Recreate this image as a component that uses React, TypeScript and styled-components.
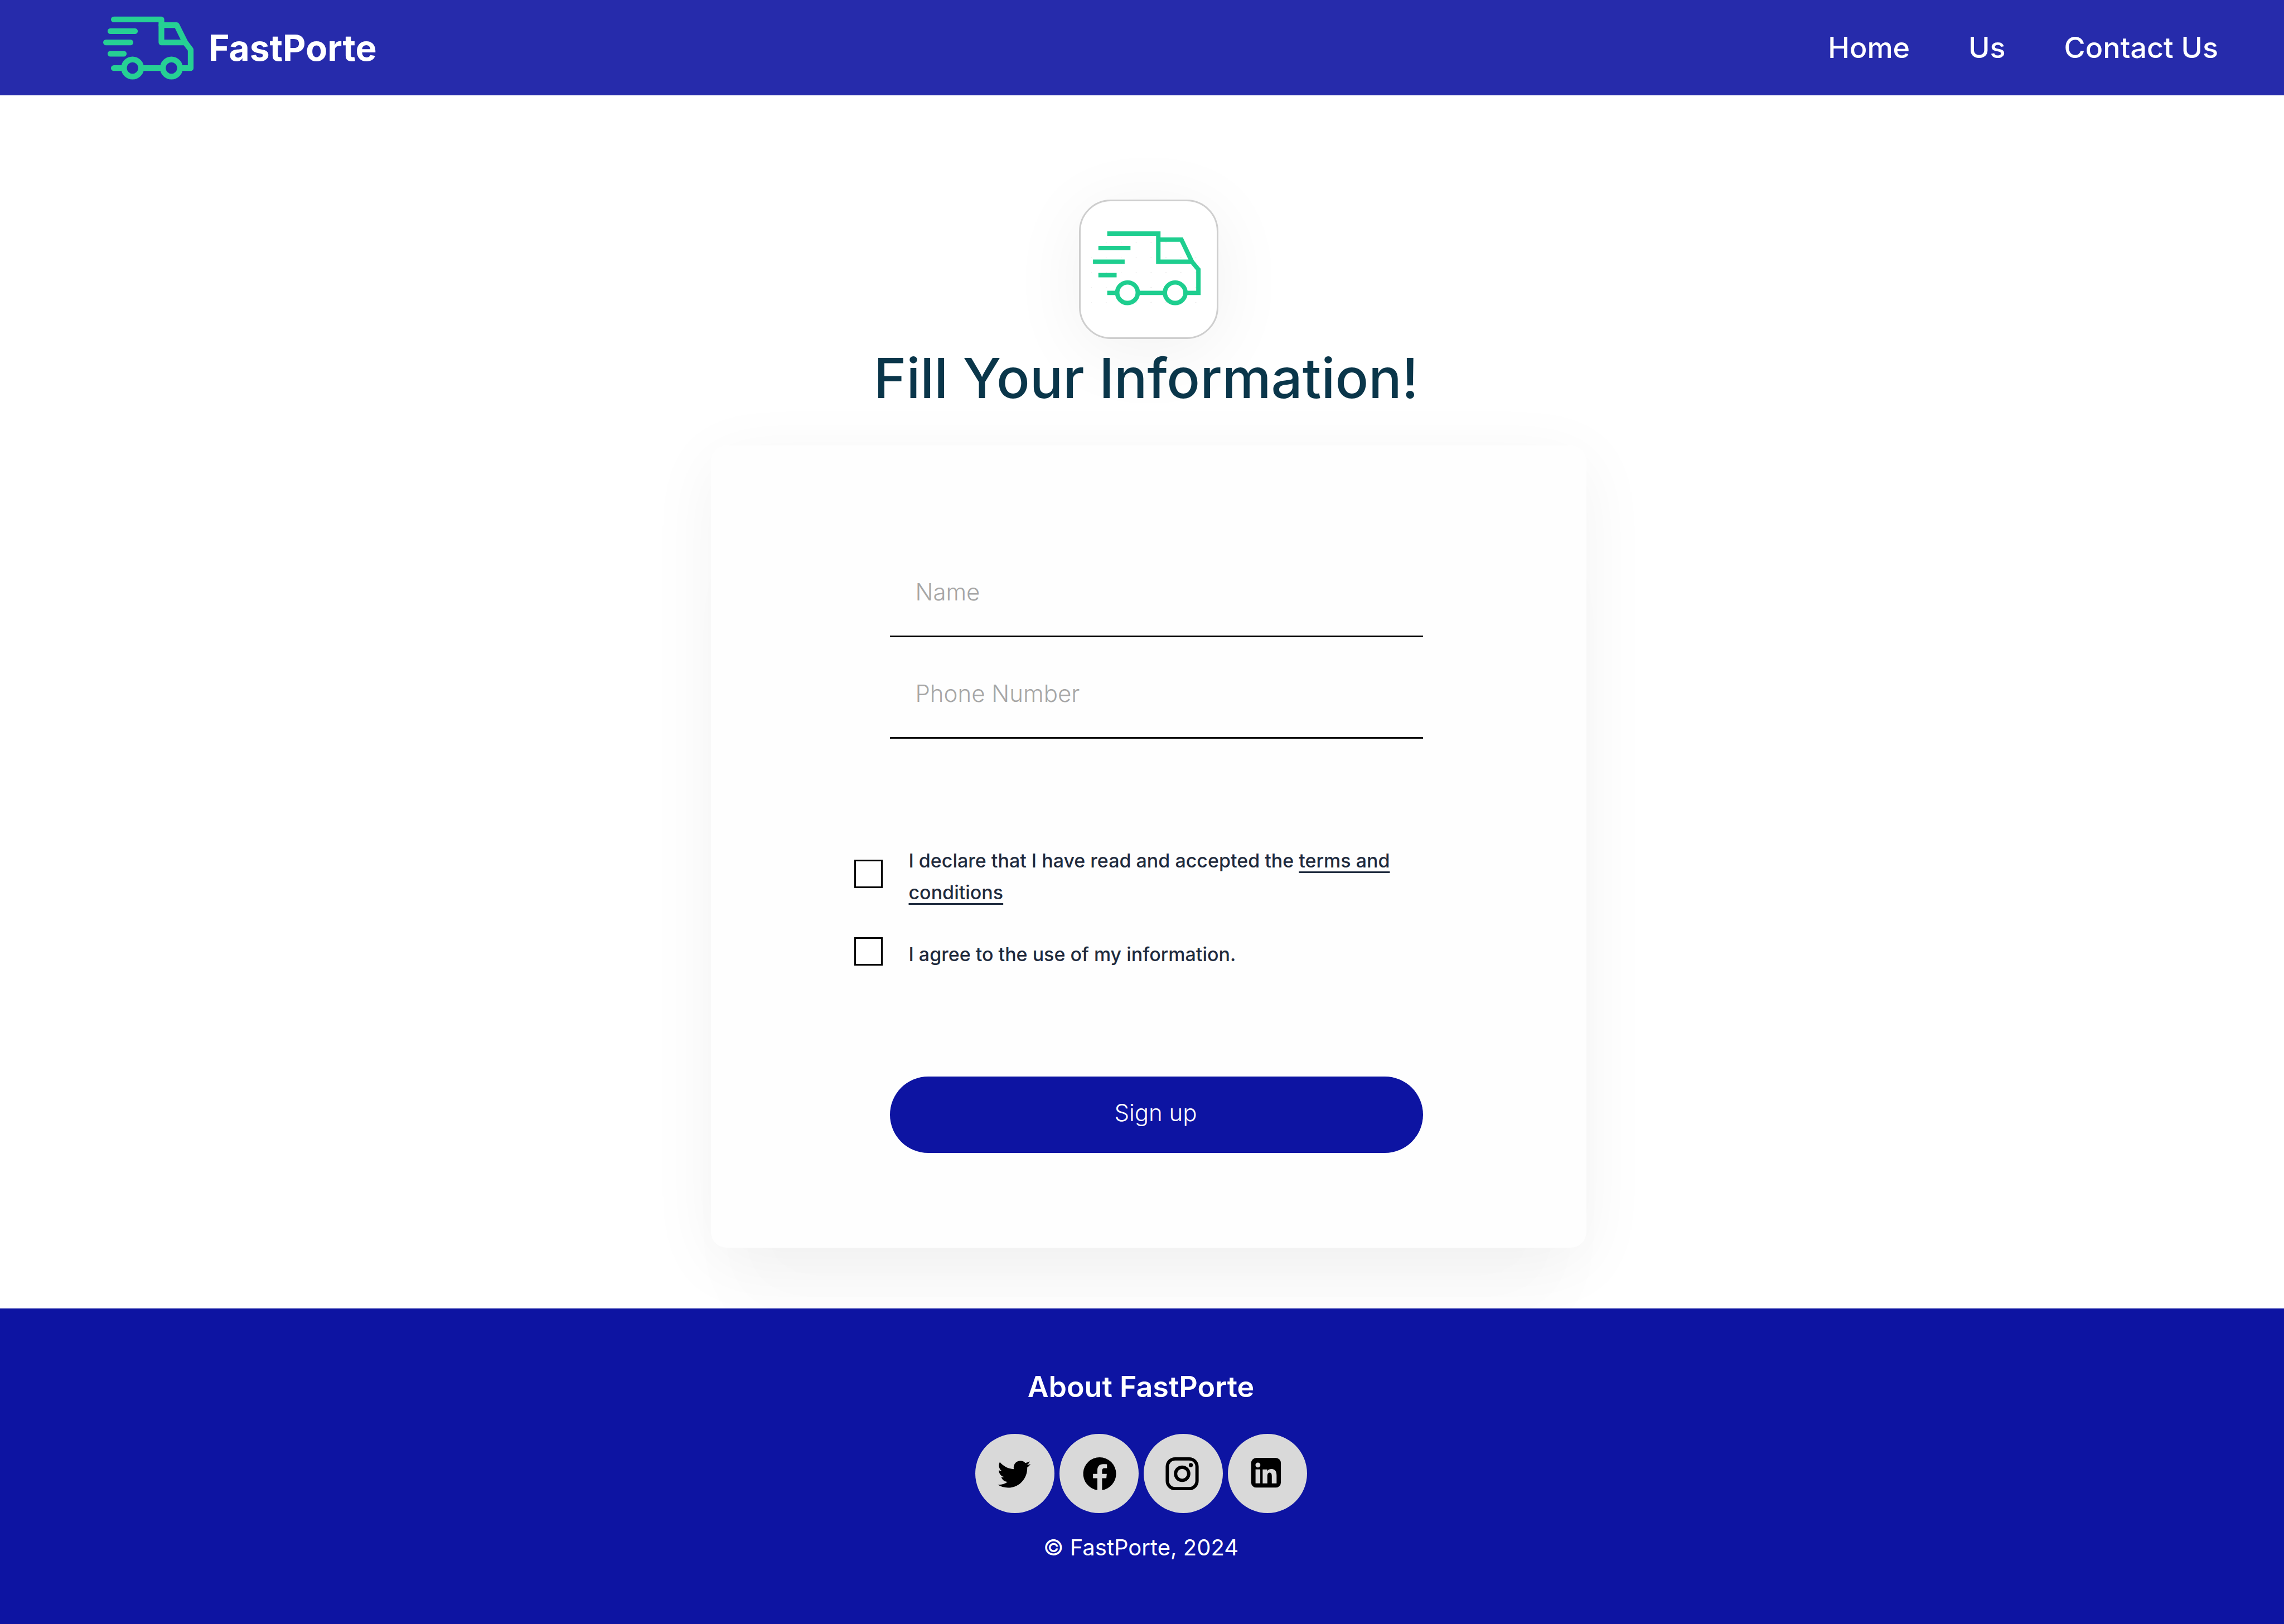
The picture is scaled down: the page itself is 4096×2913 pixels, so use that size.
import React from "react";
import styled, { createGlobalStyle } from "styled-components";

const color = {
  header: "#262bab",
  brand: "#0d14a2",
  mint: "#26d094",
  mintDeep: "#1ece8f",
  heading: "#0a364a",
  body: "#1e2a3d",
  muted: "#a6a6a6",
  disc: "#d9d9d9",
};

const GlobalStyle = createGlobalStyle`
  *, *::before, *::after { box-sizing: border-box; }
  body {
    margin: 0;
    background: #fff;
    color: ${color.body};
    font-family: Inter, "Liberation Sans", sans-serif;
  }
`;

const Page = styled.div`
  display: flex;
  flex-direction: column;
  min-height: 100vh;
`;

const Header = styled.header`
  display: flex;
  align-items: center;
  justify-content: space-between;
  height: 171px;
  padding: 0 118px 0 182px;
  background: ${color.header};
  color: #fff;
`;

const Brand = styled.a`
  display: flex;
  align-items: center;
  gap: 24px;
  color: inherit;
  font-size: 64px;
  line-height: 76px;
  font-weight: 700;
  text-decoration: none;
`;

const BrandMark = styled.svg`
  display: block;
  width: 168px;
  height: 117px;
`;

const Nav = styled.nav`
  display: flex;
  gap: 105px;
`;

const NavLink = styled.a`
  color: inherit;
  font-size: 52px;
  line-height: 62px;
  font-weight: 500;
  text-decoration: none;
`;

const Main = styled.main`
  display: flex;
  flex: 1;
  flex-direction: column;
  align-items: center;
  padding: 187px 0 109px 23px;
`;

const Tile = styled.div`
  display: flex;
  align-items: center;
  justify-content: center;
  width: 250px;
  height: 250px;
  border: 3px solid #cecece;
  border-radius: 57px;
  background: #fff;
  box-shadow: 0 20px 136px rgba(0, 0, 0, 0.06);
`;

const TileMark = styled.svg`
  display: block;
  width: 205px;
  height: 142px;
`;

const Title = styled.h1`
  margin: 10px 0 60px;
  padding-right: 8px;
  color: ${color.heading};
  font-size: 99px;
  line-height: 121px;
  font-weight: 500;
`;

const Card = styled.form`
  display: flex;
  flex-direction: column;
  gap: 190px;
  width: 1570px;
  max-width: 100%;
  padding: 237px 293px 170px 257px;
  border-radius: 28px;
  background: #fefefe;
  box-shadow:
    0 26px 124px rgba(0, 0, 0, 0.05),
    0 149px 128px -43px rgba(0, 0, 0, 0.018);
`;

const Fields = styled.div`
  display: flex;
  flex-direction: column;
  gap: 75px;
  padding-left: 64px;
`;

const Field = styled.div`
  display: grid;
  grid-template-areas: "field";
`;

const TextInput = styled.input`
  grid-area: field;
  width: 100%;
  height: 107px;
  padding: 0 46px 52px;
  border: 0;
  border-bottom: 3px solid #000;
  border-radius: 0;
  outline: none;
  background: transparent;
  color: ${color.body};
  font-family: inherit;
  font-size: 42px;
  line-height: 52px;
  font-weight: 300;
`;

const FieldLabel = styled.label`
  grid-area: field;
  padding: 0 46px;
  color: ${color.muted};
  font-size: 42px;
  line-height: 52px;
  font-weight: 300;
  pointer-events: none;

  ${TextInput}:not(:placeholder-shown) + & {
    visibility: hidden;
  }
`;

const Consents = styled.div`
  display: flex;
  flex-direction: column;
  gap: 52px;
`;

const Consent = styled.div`
  display: flex;
  align-items: center;
  gap: 47px;
`;

const Checkbox = styled.input`
  flex: none;
  appearance: none;
  width: 51px;
  height: 51px;
  margin: 0 0 9px;
  border: 3px solid #000;
  background: #fff;

  &:checked {
    background: ${color.brand};
    box-shadow: inset 0 0 0 6px #fff;
  }
`;

const ConsentLabel = styled.label`
  font-size: 34px;
  line-height: 57px;
  font-weight: 500;
`;

const TextLink = styled.a`
  color: inherit;
  text-decoration: underline;
  text-decoration-thickness: 3px;
  text-underline-offset: 7px;
`;

const Actions = styled.div`
  display: flex;
  padding-left: 64px;
`;

const SubmitButton = styled.button`
  flex: 1;
  height: 137px;
  padding: 0 2px 8px 0;
  border: 0;
  border-radius: 69px;
  background: ${color.brand};
  color: #fff;
  font-family: inherit;
  font-size: 42px;
  line-height: 52px;
  font-weight: 300;
`;

const Footer = styled.footer`
  display: flex;
  flex-direction: column;
  align-items: center;
  padding: 110px 4px 113px 0;
  background: ${color.brand};
  color: #fff;
`;

const FooterTitle = styled.h2`
  margin: 0;
  font-size: 52px;
  line-height: 62px;
  font-weight: 600;
`;

const Socials = styled.div`
  display: flex;
  gap: 9px;
  margin: 53px 0 38px;
`;

const SocialLink = styled.a`
  display: flex;
  align-items: center;
  justify-content: center;
  width: 142px;
  height: 142px;
  border-radius: 50%;
  background: ${color.disc};
  color: #000;
`;

const SocialIcon = styled.svg<{ $size: number }>`
  display: block;
  width: ${(p) => p.$size}px;
  height: ${(p) => p.$size}px;
  fill: currentColor;
`;

const Copyright = styled.p`
  margin: 0;
  font-size: 40px;
  line-height: 48px;
`;

function RoundedTruck() {
  return (
    <BrandMark
      viewBox="0 -1 236 164"
      fill="none"
      stroke={color.mint}
      strokeWidth="14.4"
      strokeLinecap="round"
      strokeLinejoin="round"
      aria-hidden="true"
    >
      <path d="M31 10H151V67.8H211" />
      <path d="M151 24.4H189.5L211 67.8 224.7 86V132.6H198" />
      <path d="M31 132.6H56M100 132.6H154" />
      <path d="M22.5 39.5H84.3M11.4 67.8H73M22.5 96.2H56.2" />
      <circle cx="78.2" cy="132.3" r="21.6" />
      <circle cx="176.2" cy="132.3" r="21.6" />
    </BrandMark>
  );
}

const gridRows = [
  { y: 0, from: 1, to: 4 },
  { y: 1, from: 1, to: 6 },
  { y: 2, from: 0, to: 7 },
  { y: 3, from: 0, to: 7 },
  { y: 4, from: 0, to: 7 },
  { y: 5, from: 0, to: 8 },
];

function SquareTruck() {
  return (
    <TileMark viewBox="2 4 288 200" fill="none" aria-hidden="true">
      <g stroke={color.mintDeep} strokeWidth="11.2">
        <path d="M42 14H171V85H256" />
        <path d="M171 29H229.3L256 85 272.3 104.5V163.7H240" />
        <path d="M42 163.7H66M120 163.7H187" />
        <path d="M19.6 50.3H100.7M6 85H86M19.6 118.7H65.7" />
        <circle cx="93.2" cy="163.3" r="26" />
        <circle cx="213.6" cy="163.3" r="26" />
      </g>
      <g fill="#000" opacity="0.22">
        {gridRows.flatMap((row) =>
          Array.from({ length: row.to - row.from + 1 }, (_, i) => (
            <circle
              key={`${row.y}-${i}`}
              cx={1.4 + (row.from + i) * 37.8}
              cy={-0.6 + row.y * 37.6}
              r="0.8"
            />
          ))
        )}
      </g>
    </TileMark>
  );
}

function Twitter() {
  return (
    <SocialIcon $size={68} viewBox="0.5 0 24 24" aria-hidden="true">
      <path d="M22.46,6C21.69,6.35 20.86,6.58 20,6.69C20.88,6.16 21.56,5.32 21.88,4.31C21.05,4.81 20.13,5.16 19.16,5.36C18.37,4.5 17.26,4 16,4C13.65,4 11.73,5.92 11.73,8.29C11.73,8.63 11.77,8.96 11.84,9.27C8.28,9.09 5.11,7.38 3,4.79C2.63,5.42 2.42,6.16 2.42,6.94C2.42,8.43 3.17,9.75 4.33,10.5C3.62,10.5 2.96,10.3 2.38,10C2.38,10 2.38,10 2.38,10.03C2.38,12.11 3.86,13.85 5.82,14.24C5.46,14.34 5.08,14.39 4.69,14.39C4.42,14.39 4.15,14.36 3.89,14.31C4.43,16 6,17.26 7.89,17.29C6.43,18.45 4.58,19.13 2.56,19.13C2.22,19.13 1.88,19.11 1.54,19.07C3.44,20.29 5.7,21 8.12,21C16,21 20.33,14.46 20.33,8.79C20.33,8.6 20.33,8.42 20.32,8.23C21.16,7.63 21.88,6.87 22.46,6Z" />
    </SocialIcon>
  );
}

function Facebook() {
  return (
    <SocialIcon $size={71} viewBox="-0.5 0 24 24" aria-hidden="true">
      <path d="M12 2A10 10 0 0 0 10.64 21.9V14.7H8V12.1H10.64V9.8C10.64 7.5 12 6.15 14.1 6.15C15 6.15 15.8 6.2 16.48 6.25V8.65H15C13.9 8.65 13.5 9.3 13.5 10.2V12.1H16.35L16.1 14.7H13.5V21.9A10 10 0 0 0 22 12A10 10 0 0 0 12 2Z" />
    </SocialIcon>
  );
}

function Instagram() {
  return (
    <SocialIcon $size={71} viewBox="0.5 0 24 24" aria-hidden="true">
      <rect x="3" y="3" width="18" height="18" rx="4.7" fill="none" stroke="currentColor" strokeWidth="2" />
      <circle cx="12" cy="12" r="4" fill="none" stroke="currentColor" strokeWidth="2" />
      <circle cx="17.25" cy="6.75" r="1.25" />
    </SocialIcon>
  );
}

function LinkedIn() {
  return (
    <SocialIcon $size={71} viewBox="0.7 0.6 24 24" aria-hidden="true">
      <rect x="3" y="3" width="18" height="18" rx="3.1" />
      <g fill={color.disc}>
        <circle cx="7.08" cy="7.3" r="1.5" />
        <path d="M5.64 9.95H8.5V18.4H5.64Z" />
        <path d="M9.96 9.95H12.7V11.05C13.1 10.3 14.1 9.75 15.25 9.75C17.6 9.75 18.4 11.3 18.4 13.7V18.4H15.5V14.1C15.5 12.8 15.2 11.9 14.2 11.9C13.2 11.9 12.8 12.8 12.8 14.1V18.4H9.96Z" />
      </g>
    </SocialIcon>
  );
}

const socials = [
  { name: "Twitter", Icon: Twitter },
  { name: "Facebook", Icon: Facebook },
  { name: "Instagram", Icon: Instagram },
  { name: "LinkedIn", Icon: LinkedIn },
];

export default function App() {
  return (
    <Page>
      <GlobalStyle />
      <Header>
        <Brand href="#">
          <RoundedTruck />
          FastPorte
        </Brand>
        <Nav>
          <NavLink href="#">Home</NavLink>
          <NavLink href="#">Us</NavLink>
          <NavLink href="#">Contact Us</NavLink>
        </Nav>
      </Header>

      <Main>
        <Tile>
          <SquareTruck />
        </Tile>
        <Title>Fill Your Information!</Title>
        <Card onSubmit={(e) => e.preventDefault()}>
          <Fields>
            <Field>
              <TextInput id="name" type="text" placeholder=" " />
              <FieldLabel htmlFor="name">Name</FieldLabel>
            </Field>
            <Field>
              <TextInput id="phone" type="tel" placeholder=" " />
              <FieldLabel htmlFor="phone">Phone Number</FieldLabel>
            </Field>
          </Fields>
          <Consents>
            <Consent>
              <Checkbox id="terms" type="checkbox" />
              <ConsentLabel htmlFor="terms">
                I declare that I have read and accepted the{" "}
                <TextLink href="#">terms and conditions</TextLink>
              </ConsentLabel>
            </Consent>
            <Consent>
              <Checkbox id="usage" type="checkbox" />
              <ConsentLabel htmlFor="usage">I agree to the use of my information.</ConsentLabel>
            </Consent>
          </Consents>
          <Actions>
            <SubmitButton type="submit">Sign up</SubmitButton>
          </Actions>
        </Card>
      </Main>

      <Footer>
        <FooterTitle>About FastPorte</FooterTitle>
        <Socials>
          {socials.map(({ name, Icon }) => (
            <SocialLink key={name} href="#" aria-label={name}>
              <Icon />
            </SocialLink>
          ))}
        </Socials>
        <Copyright>© FastPorte, 2024</Copyright>
      </Footer>
    </Page>
  );
}
